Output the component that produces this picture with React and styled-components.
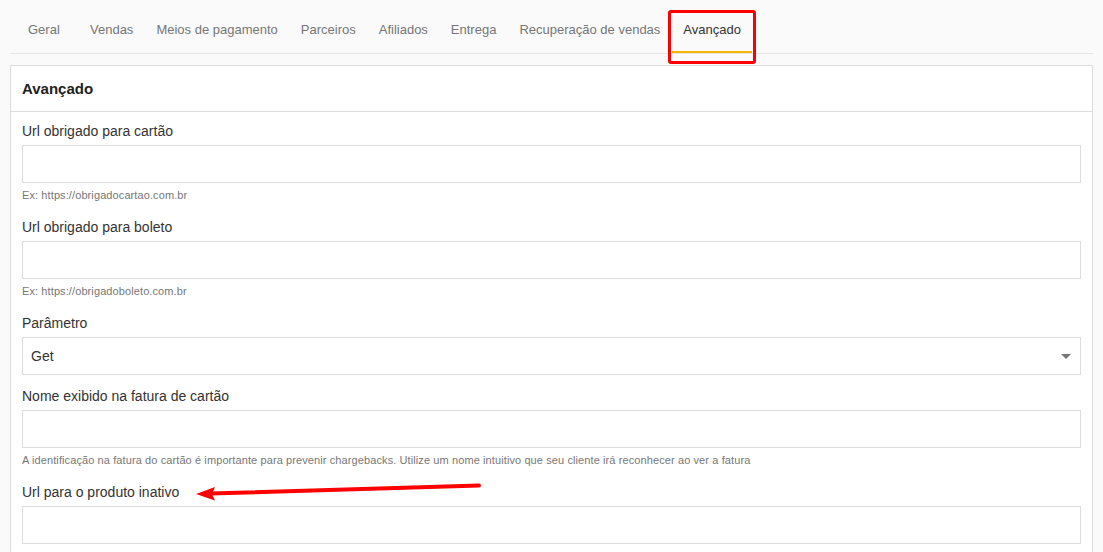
import styled, { createGlobalStyle } from "styled-components";

const GlobalStyle = createGlobalStyle`
  body {
    margin: 0;
    background: #fafafa;
    font-family: "Liberation Sans", Arial, sans-serif;
    color: #333;
  }
`;

const TABS = [
  "Geral",
  "Vendas",
  "Meios de pagamento",
  "Parceiros",
  "Afiliados",
  "Entrega",
  "Recuperação de vendas",
  "Avançado",
];

const App = () => {
  return (
    <Page>
      <GlobalStyle />
      <TabBar>
        {TABS.map((tab) => (
          <Tab key={tab} $active={tab === "Avançado"}>
            {tab}
            {tab === "Avançado" && <Highlight />}
          </Tab>
        ))}
      </TabBar>

      <Panel>
        <PanelHeader>Avançado</PanelHeader>
        <PanelBody>
          <Field>
            <Label>Url obrigado para cartão</Label>
            <Input />
            <Help>Ex: https://obrigadocartao.com.br</Help>
          </Field>
          <Field>
            <Label>Url obrigado para boleto</Label>
            <Input />
            <Help>Ex: https://obrigadoboleto.com.br</Help>
          </Field>
          <Field $plain>
            <Label>Parâmetro</Label>
            <Select>
              <span>Get</span>
              <Caret />
            </Select>
          </Field>
          <Field>
            <Label>Nome exibido na fatura de cartão</Label>
            <Input />
            <Help>
              A identificação na fatura do cartão é importante para prevenir
              chargebacks. Utilize um nome intuitivo que seu cliente irá
              reconhecer ao ver a fatura
            </Help>
          </Field>
          <Field $plain>
            <Label>Url para o produto inativo</Label>
            <Input />
          </Field>
        </PanelBody>
      </Panel>

      <Arrow width="1103" height="552" viewBox="0 0 1103 552">
        <line
          x1="479"
          y1="485.5"
          x2="210"
          y2="493.5"
          stroke="#ff0000"
          strokeWidth="4"
          strokeLinecap="round"
        />
        <polygon points="196,494 215,487 212,494 215,500.5" fill="#ff0000" />
      </Arrow>
    </Page>
  );
};

const Page = styled.div`
  position: relative;
  height: 552px;
  overflow: hidden;
  padding: 0 10px;
`;

const TabBar = styled.div`
  display: flex;
  height: 53px;
  padding-left: 7px;
  border-bottom: 1px solid #e6e6e6;
`;

const Tab = styled.div`
  position: relative;
  box-sizing: border-box;
  min-width: 61px;
  height: 53px;
  padding: 20px 11px 0;
  font-size: 13px;
  line-height: 20px;
  color: ${(p) => (p.$active ? "#333" : "#767676")};
  border-bottom: 2px solid ${(p) => (p.$active ? "#f7b500" : "transparent")};
  white-space: nowrap;
  margin-right: 1px;
`;

const Highlight = styled.span`
  position: absolute;
  left: -4px;
  right: -4px;
  top: 10px;
  bottom: -13px;
  border: 3px solid #ff0000;
  border-radius: 3px;
  pointer-events: none;
`;

const Panel = styled.div`
  margin-top: 11px;
  background: #fff;
  border: 1px solid #dddddd;
`;

const PanelHeader = styled.div`
  height: 45px;
  padding: 0 11px;
  display: flex;
  align-items: center;
  font-size: 15px;
  font-weight: bold;
  color: #222;
  border-bottom: 1px solid #dddddd;
`;

const PanelBody = styled.div`
  padding: 9px 11px 20px;
`;

const Field = styled.div`
  display: flex;
  flex-direction: column;
  margin-bottom: ${(p) => (p.$plain ? "11px" : "14px")};
`;

const Label = styled.label`
  font-size: 14px;
  line-height: 20px;
  color: #333;
  margin-bottom: 4px;
`;

const Input = styled.div`
  box-sizing: border-box;
  height: 38px;
  border: 1px solid #dddddd;
  background: #fff;
`;

const Select = styled.div`
  box-sizing: border-box;
  height: 38px;
  border: 1px solid #dddddd;
  display: flex;
  align-items: center;
  justify-content: space-between;
  padding: 0 9px 0 8px;
  font-size: 14px;
  color: #333;
`;

const Caret = styled.span`
  width: 0;
  height: 0;
  border-left: 5px solid transparent;
  border-right: 5px solid transparent;
  border-top: 5px solid #777;
`;

const Help = styled.div`
  margin-top: 4px;
  font-size: 11px;
  line-height: 16px;
  letter-spacing: 0.1px;
  color: #777;
`;

const Arrow = styled.svg`
  position: absolute;
  left: 0;
  top: 0;
  pointer-events: none;
`;

export default App;
